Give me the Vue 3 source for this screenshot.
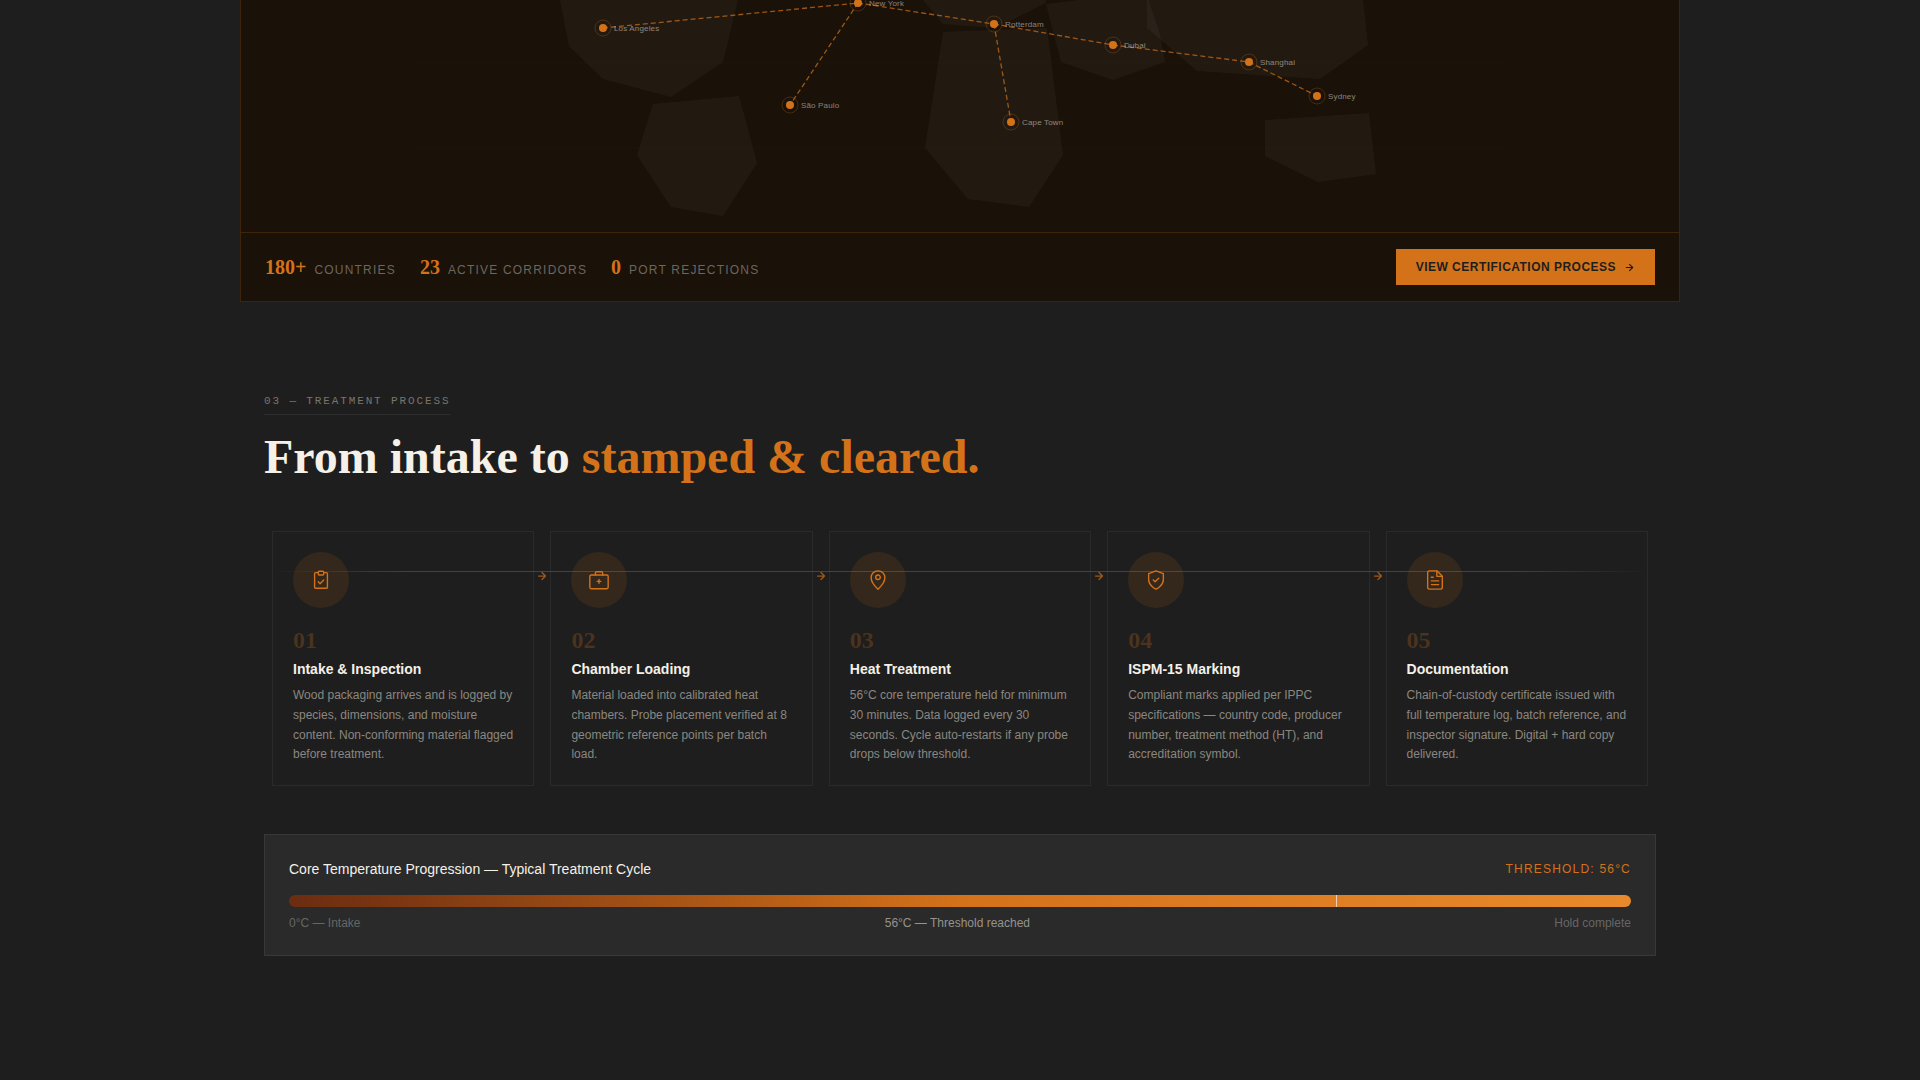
<script setup>
const continents = [
  '560,0 569,46 603,79 671,97 723,62 738,0 738,-40 560,-40',
  '653,104 739,96 757,163 723,216 671,207 637,155',
  '923,0 943,24 995,28 1046,3 1046,-40 923,-40',
  '943,32 1047,28 1063,155 1029,207 968,199 925,148',
  '1046,4 1080,0 1146,-8 1160,35 1165,62 1113,80 1061,62',
  '1146,-40 1147,28 1197,71 1320,79 1368,45 1362,-10',
  '1265,120 1369,113 1376,174 1318,182 1265,156'
]

const ports = [
  { name: 'Los Angeles', x: 603, y: 28 },
  { name: 'New York', x: 858, y: 3 },
  { name: 'São Paulo', x: 790, y: 105 },
  { name: 'Rotterdam', x: 994, y: 24 },
  { name: 'Cape Town', x: 1011, y: 122 },
  { name: 'Dubai', x: 1113, y: 45 },
  { name: 'Shanghai', x: 1249, y: 62 },
  { name: 'Sydney', x: 1317, y: 96 }
]

const routes = [
  'M603 28 L858 3',
  'M858 3 L790 105',
  'M858 3 L994 24',
  'M994 24 L1011 122',
  'M994 24 L1113 45',
  'M1113 45 L1249 62',
  'M1249 62 L1317 96'
]

const stats = [
  { value: '180+', label: 'Countries' },
  { value: '23', label: 'Active corridors' },
  { value: '0', label: 'Port rejections' }
]

const steps = [
  {
    title: 'Intake & Inspection',
    text: 'Wood packaging arrives and is logged by species, dimensions, and moisture content. Non-conforming material flagged before treatment.',
    icon: ['M9 4H6a1 1 0 0 0-1 1v15a1 1 0 0 0 1 1h12a1 1 0 0 0 1-1V5a1 1 0 0 0-1-1h-3', 'M10 2.500h4a1 1 0 0 1 1 1v2a1 1 0 0 1-1 1h-4a1 1 0 0 1-1-1v-2a1 1 0 0 1 1-1z', 'M9 14l2 2 4-4']
  },
  {
    title: 'Chamber Loading',
    text: 'Material loaded into calibrated heat chambers. Probe placement verified at 8 geometric reference points per batch load.',
    icon: ['M3.500 6.500h17a1.500 1.500 0 0 1 1.500 1.500v12a1.500 1.500 0 0 1-1.500 1.500h-17a1.500 1.500 0 0 1-1.500-1.500v-12a1.500 1.500 0 0 1 1.500-1.500z', 'M8 6.500v-2a1.500 1.500 0 0 1 1.500-1.500h5a1.500 1.500 0 0 1 1.500 1.500v2', 'M12 11.500v4M10 13.500h4']
  },
  {
    title: 'Heat Treatment',
    text: '56°C core temperature held for minimum 30 minutes. Data logged every 30 seconds. Cycle auto-restarts if any probe drops below threshold.',
    icon: ['M12 2c-4.200 0-7.500 3.200-7.500 7.500C4.500 15 12 22 12 22s7.500-7 7.500-12.500C19.500 5.200 16.200 2 12 2z', 'M12 6.500a2.500 2.500 0 1 1 0 5 2.500 2.500 0 0 1 0-5z']
  },
  {
    title: 'ISPM-15 Marking',
    text: 'Compliant marks applied per IPPC specifications — country code, producer number, treatment method (HT), and accreditation symbol.',
    icon: ['M12 22s8-4 8-10V5l-8-3-8 3v7c0 6 8 10 8 10z', 'M9 12l2 2 4-4']
  },
  {
    title: 'Documentation',
    text: 'Chain-of-custody certificate issued with full temperature log, batch reference, and inspector signature. Digital + hard copy delivered.',
    icon: ['M14 2H6a2 2 0 0 0-2 2v16a2 2 0 0 0 2 2h12a2 2 0 0 0 2-2V8z', 'M14 2v6h6', 'M16 13H8M16 17H8M10 9H8']
  }
]

const stepNumber = (index) => String(index + 1).padStart(2, '0')
</script>

<template>
  <main class="page">
    <section class="network" aria-label="Shipping corridors">
      <svg class="map" viewBox="241 0 1438 232" preserveAspectRatio="xMidYMax slice" aria-hidden="true">
        <path class="grid" d="M416 63H1504M416 148H1504" />
        <polygon v-for="shape in continents" :key="shape" class="land" :points="shape" />
        <path v-for="route in routes" :key="route" class="route" :d="route" />
        <g v-for="port in ports" :key="port.name">
          <circle class="ring" :cx="port.x" :cy="port.y" r="8" />
          <circle class="dot" :cx="port.x" :cy="port.y" r="4" />
          <text class="port" :x="port.x + 11" :y="port.y + 3">{{ port.name }}</text>
        </g>
      </svg>
      <div class="network-foot">
        <dl class="stats">
          <div v-for="stat in stats" :key="stat.label" class="stat">
            <dd>{{ stat.value }}</dd>
            <dt>{{ stat.label }}</dt>
          </div>
        </dl>
        <a class="cta" href="#process">
          View certification process
          <svg class="arrow" viewBox="0 0 24 24" aria-hidden="true"><path d="M5 12h14M12 5l7 7-7 7" /></svg>
        </a>
      </div>
    </section>

    <section id="process" class="process">
      <p class="eyebrow">03 — Treatment process</p>
      <h2>From intake to <em>stamped &amp; cleared.</em></h2>

      <ol class="steps">
        <li v-for="(step, index) in steps" :key="step.title" class="step">
          <article class="card">
            <span class="badge">
              <svg viewBox="0 0 24 24" aria-hidden="true">
                <path v-for="d in step.icon" :key="d" :d="d" />
              </svg>
            </span>
            <p class="number">{{ stepNumber(index) }}</p>
            <h3>{{ step.title }}</h3>
            <p class="text">{{ step.text }}</p>
          </article>
          <svg v-if="index < steps.length - 1" class="next" viewBox="0 0 24 24" aria-hidden="true">
            <path d="M5 12h14M12 5l7 7-7 7" />
          </svg>
        </li>
      </ol>

      <section class="cycle">
        <header class="cycle-head">
          <h3>Core Temperature Progression — Typical Treatment Cycle</h3>
          <span class="threshold">Threshold: 56°C</span>
        </header>
        <div class="bar"><span class="mark"></span></div>
        <div class="scale">
          <span>0°C — Intake</span>
          <span class="reached">56°C — Threshold reached</span>
          <span>Hold complete</span>
        </div>
      </section>
    </section>
  </main>
</template>

<style>
body {
  margin: 0;
  background: #1e1e1e;
}
</style>

<style scoped>
.page {
  --orange: #d4721a;
  --cream: #f5f0e8;
  color: var(--cream);
  font-family: "Liberation Sans", Arial, sans-serif;
}

h2,
h3,
p,
dl,
dd,
ol {
  margin: 0;
  padding: 0;
}

.network {
  box-sizing: border-box;
  max-width: 1440px;
  margin: 0 auto;
  border: 1px solid rgba(212, 114, 26, 0.2);
  border-top: 0;
  background: #1a1108;
}

.map {
  display: block;
  width: 100%;
  height: 232px;
}

.grid {
  stroke: rgba(255, 255, 255, 0.015);
  fill: none;
}

.land {
  fill: rgba(255, 255, 255, 0.04);
}

.route {
  fill: none;
  stroke: var(--orange);
  stroke-width: 1.3;
  stroke-dasharray: 5 3;
  opacity: 0.7;
}

.ring {
  fill: none;
  stroke: var(--orange);
  opacity: 0.25;
}

.dot {
  fill: var(--orange);
}

.port {
  fill: rgba(245, 240, 232, 0.5);
  font-size: 8px;
  letter-spacing: 0.02em;
}

.network-foot {
  display: flex;
  align-items: center;
  justify-content: space-between;
  gap: 24px;
  padding: 16px 24px;
  border-top: 1px solid rgba(212, 114, 26, 0.2);
}

.stats {
  display: flex;
  flex-wrap: wrap;
  gap: 24px;
}

.stat {
  display: flex;
  align-items: baseline;
  gap: 8px;
}

.stat dd {
  color: var(--orange);
  font: bold 20px/24px "Liberation Serif", "Times New Roman", serif;
}

.stat dt {
  color: #6b665e;
  font-size: 12px;
  letter-spacing: 0.1em;
  text-transform: uppercase;
}

.cta {
  display: flex;
  align-items: center;
  gap: 8px;
  padding: 10px 20px;
  background: var(--orange);
  color: #1e1e1e;
  font-size: 12px;
  font-weight: bold;
  line-height: 16px;
  letter-spacing: 0.04em;
  text-decoration: none;
  text-transform: uppercase;
}

.arrow,
.next {
  fill: none;
  stroke: currentColor;
  stroke-width: 2.5;
  stroke-linecap: round;
  stroke-linejoin: round;
}

.arrow {
  width: 11px;
  height: 11px;
}

.process {
  box-sizing: border-box;
  max-width: 1440px;
  margin: 0 auto;
  padding: 91px 24px 124px;
}

.eyebrow {
  width: fit-content;
  padding-bottom: 5px;
  border-bottom: 1px solid #2e2e2e;
  color: #7a756c;
  font: 11px/16px "Liberation Mono", "Courier New", monospace;
  letter-spacing: 0.17em;
  text-transform: uppercase;
}

h2 {
  margin-top: 16px;
  font: bold 48px/52px "Liberation Serif", "Times New Roman", serif;
}

h2 em {
  color: var(--orange);
  font-style: normal;
}

.steps {
  position: relative;
  display: grid;
  grid-template-columns: repeat(5, 1fr);
  margin-top: 48px;
  list-style: none;
}

.steps::after {
  content: "";
  position: absolute;
  top: 40px;
  left: 8px;
  right: 8px;
  height: 1px;
  background: linear-gradient(90deg, transparent, var(--orange) 10%, var(--orange) 90%, transparent);
  opacity: 0.35;
}

.step {
  position: relative;
  display: flex;
  padding: 0 8px;
}

.card {
  flex: 1;
  padding: 20px;
  border: 1px solid #2a2a2a;
}

.badge {
  display: grid;
  place-items: center;
  width: 56px;
  height: 56px;
  border-radius: 50%;
  background: rgba(212, 114, 26, 0.12);
}

.badge svg {
  width: 22px;
  height: 22px;
  fill: none;
  stroke: var(--orange);
  stroke-width: 1.5;
  stroke-linecap: round;
  stroke-linejoin: round;
}

.next {
  position: absolute;
  top: 39px;
  right: -6px;
  width: 12px;
  height: 12px;
  color: var(--orange);
  opacity: 0.7;
}

.number {
  margin-top: 20px;
  color: rgba(212, 114, 26, 0.25);
  font: bold 24px/24px "Liberation Serif", "Times New Roman", serif;
}

.card h3 {
  margin-top: 6px;
  font-size: 14px;
  line-height: 22px;
}

.text {
  margin-top: 6px;
  color: #8a8780;
  font-size: 12px;
  line-height: 1.65;
}

.cycle {
  margin-top: 48px;
  padding: 24px;
  border: 1px solid #383838;
  background: #2a2a2a;
}

.cycle-head,
.scale {
  display: flex;
  justify-content: space-between;
  gap: 16px;
}

.cycle-head {
  line-height: 20px;
}

.cycle h3 {
  font-size: 14px;
  font-weight: normal;
}

.threshold {
  color: var(--orange);
  font-size: 12px;
  letter-spacing: 0.1em;
  text-transform: uppercase;
}

.bar {
  position: relative;
  height: 12px;
  margin-top: 16px;
  border-radius: 6px;
  background: linear-gradient(90deg, #6b2c10, #d4721a 50%, #e8892b);
}

.mark {
  position: absolute;
  top: 0;
  bottom: 0;
  left: 78%;
  width: 1px;
  background: var(--cream);
  opacity: 0.7;
}

.scale {
  margin-top: 8px;
  color: #666;
  font-size: 12px;
  line-height: 16px;
}

.reached {
  color: #96938c;
}
</style>
